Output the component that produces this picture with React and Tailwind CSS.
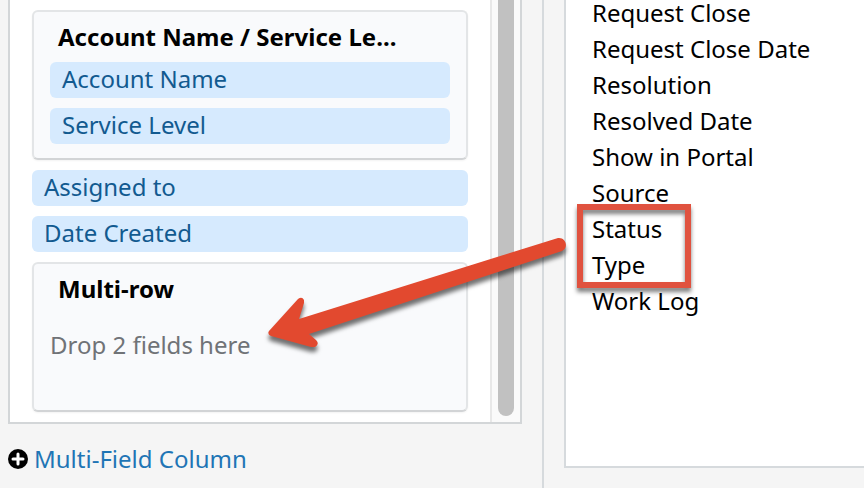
const ACCOUNT_FIELDS = ["Account Name", "Service Level"];
const SINGLE_FIELDS = ["Assigned to", "Date Created"];

const FIELDS_BEFORE = [
  "Request Close",
  "Request Close Date",
  "Resolution",
  "Resolved Date",
  "Show in Portal",
  "Source",
];
const MARKED_FIELDS = ["Status", "Type"];
const FIELDS_AFTER = ["Work Log"];

const FieldChip = ({ label }) => (
  <li className="h-9 px-3 rounded-md bg-[#d6eafe] text-[#125a90] leading-[34px] cursor-move">
    {label}
  </li>
);

const FieldGroup = ({ title, children }) => (
  <li className="h-[150px] px-4 rounded-md border-2 border-[#e3e5e7] border-b-[#d2d4d6] bg-[#f9fafc] shadow-xs">
    <h2 className="h-[50px] px-2 font-bold text-black leading-[50px] truncate">
      {title}
    </h2>
    {children}
  </li>
);

const PlusIcon = () => (
  <svg viewBox="0 0 20 20" className="w-5 h-5 shrink-0" aria-hidden="true">
    <circle cx="10" cy="10" r="10" fill="#000" />
    <path
      d="M10 5v10M5 10h10"
      stroke="#fff"
      strokeWidth="3"
      strokeLinecap="round"
    />
  </svg>
);

const DropArrow = () => (
  <svg
    viewBox="0 0 320 130"
    className="absolute left-[256px] top-[229px] w-[320px] h-[130px] pointer-events-none drop-shadow-[0_5px_2px_rgba(0,0,0,0.55)]"
    aria-hidden="true"
  >
    <path
      d="M13 102 L42 70 Q46 67 48 71 L48 74 L43 90 L302 9 C310 8 313 19 306 22 L53 105 L60 111 Q64 115 59 118 L55 118 L15 107 Q11 105 13 102 Z"
      fill="#e2492f"
    />
  </svg>
);

const SelectedFields = () => (
  <section className="w-[544px] shrink-0 pl-2 pr-5 border-r-2 border-[#d6dadd]">
    <div className="flex border-2 border-t-0 border-[#d3d6d8] bg-white">
      <ul className="flex-1 min-w-0 flex flex-col gap-[10px] py-[10px] px-[22px]">
        <FieldGroup title="Account Name / Service Le...">
          <ul className="flex flex-col gap-[10px]">
            {ACCOUNT_FIELDS.map((label) => (
              <FieldChip key={label} label={label} />
            ))}
          </ul>
        </FieldGroup>
        {SINGLE_FIELDS.map((label) => (
          <FieldChip key={label} label={label} />
        ))}
        <FieldGroup title="Multi-row">
          <p className="pt-[14px] text-[#707377] leading-[34px]">
            Drop 2 fields here
          </p>
        </FieldGroup>
      </ul>
      {/* Scrollbar */}
      <div className="w-[30px] flex justify-center pb-[6px] border-l-2 border-[#e8e8e8] bg-[#fafafa]">
        <div className="w-4 rounded-b-full bg-[#c1c1c1]"></div>
      </div>
    </div>
    <a
      href="#multi-field-column"
      className="w-fit flex items-center gap-[6px] pt-[18px] pb-3 text-[#1f75b5] leading-[34px]"
    >
      <PlusIcon />
      Multi-Field Column
    </a>
  </section>
);

const AvailableFields = () => (
  <section className="flex-1 min-w-0 flex flex-col pl-5 pb-5">
    <ul className="flex-1 pl-[26px] border-l-2 border-b-2 border-[#d6dadd] bg-white text-black leading-9">
      {FIELDS_BEFORE.map((label) => (
        <li key={label} className="first:-mt-[5px]">
          {label}
        </li>
      ))}
      <li className="relative">
        <ul>
          {MARKED_FIELDS.map((label) => (
            <li key={label}>{label}</li>
          ))}
        </ul>
        {/* Marks the fields to drag */}
        <div className="absolute -left-[15px] -top-[7px] w-[114px] h-[84px] border-[6px] border-[#e0523f] drop-shadow-[0_4px_2px_rgba(0,0,0,0.5)] pointer-events-none"></div>
      </li>
      {FIELDS_AFTER.map((label) => (
        <li key={label}>{label}</li>
      ))}
    </ul>
  </section>
);

const App = () => {
  return (
    <main className="relative min-h-screen flex overflow-hidden bg-[#f5f5f5] font-['Noto_Sans',sans-serif] text-2xl whitespace-nowrap">
      <SelectedFields />
      <AvailableFields />
      <DropArrow />
    </main>
  );
};

export default App;
